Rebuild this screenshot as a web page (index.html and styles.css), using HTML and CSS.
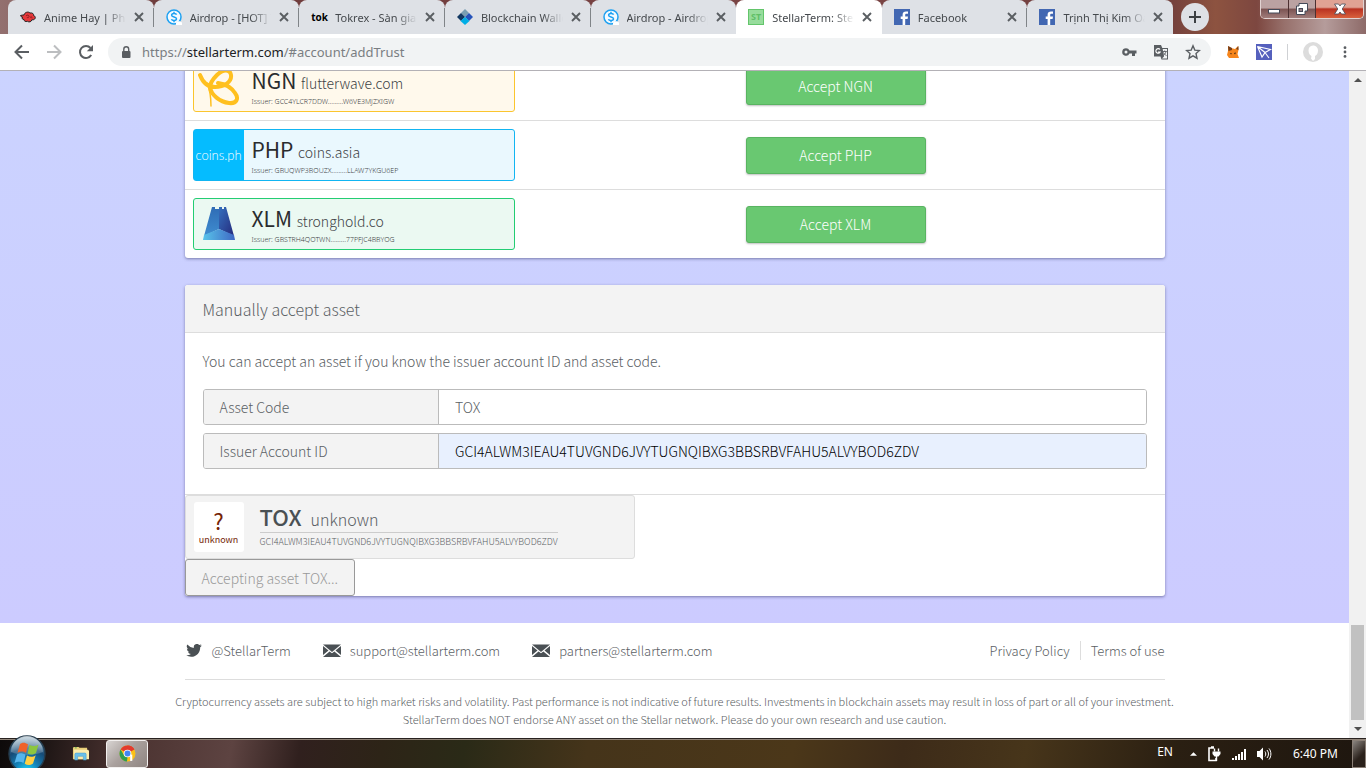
FILE: index.html
```html
<!DOCTYPE html>
<html lang="en">
<head>
  <meta charset="UTF-8" />
  <meta name="viewport" content="width=device-width, initial-scale=1.0"/>
  <title>StellarTerm</title>
  <link rel="stylesheet" href="styles.css">
</head>

<body>
  <!-- shared symbols -->
  <svg class="defs" aria-hidden="true">
    <symbol id="i-close" viewBox="0 0 10 10"><path d="M1 1l8 8M9 1l-8 8" stroke="#5a5e62" stroke-width="1.9"/></symbol>
    <symbol id="i-airdrop" viewBox="0 0 16 16">
      <circle cx="8" cy="8" r="7" fill="#f4faff" stroke="#1da1f2" stroke-width="1.5"/>
      <path d="M10.6 5.6C10 4.2 5.6 4 5.6 6.2c0 2.4 4.900 1.200 4.900 3.600 0 2.200-4.300 2.200-5.100.5M8 2.800v1.600M8 11.500v1.700" fill="none" stroke="#1da1f2" stroke-width="1.500"/>
      <path d="M10 16v-2.500l3-1.500 3 1.500V16z" fill="#fff"/>
    </symbol>
    <symbol id="i-fb" viewBox="0 0 16 16">
      <rect width="16" height="16" fill="#4267b2"/>
      <path d="M8.600 16v-6H6.700V7.500h1.900V5.800C8.600 3.600 9.900 2.500 12 2.500h2v2.300h-1.400c-1.100 0-1.400.5-1.400 1.300v1.400H14L13.600 10h-2.400v6z" fill="#fff"/>
    </symbol>
    <symbol id="i-mail" viewBox="0 0 18 13">
      <path d="M0 .5h18L9 8z" fill="#4a5054"/>
      <path d="M0 2l5.500 4.500L0 11zM18 2l-5.500 4.500L18 11zM0 13l6.600-5.600L9 9.300l2.400-1.900L18 13z" fill="#4a5054"/>
    </symbol>
  </svg>

  <div class="tabstrip">
    <div class="tabs">
      <div class="tab">
        <svg class="favicon" viewBox="0 0 16 16"><path d="M.5 6.500C2 6 3 6 4 6c.5-2.500 4-4 6-2 2.500-.5 4 1 3.500 2.500 2 .5 2.500 3 .5 4-1 .5-1.500.3-2 0-.5 2.500-3 3-4.500 1.800C5.500 13 3.800 12 4 10.500 2.500 10.500 1.500 9.500 2.500 8 1.500 8 .8 7.500.5 6.500z" fill="#e5383b" stroke="#222" stroke-width="1"/><path d="M6 7c1-1.500 3-1 3 .5S7 9 7 8M10 8.500c1-1 2.500-.5 2 .8" fill="none" stroke="#7c1518" stroke-width=".8"/></svg>
        <span class="tab-title">Anime Hay | Phim</span>
        <button class="tab-close" aria-label="Close tab"><svg><use href="#i-close"/></svg></button>
      </div>
      <div class="tab">
        <svg class="favicon"><use href="#i-airdrop"/></svg>
        <span class="tab-title">Airdrop - [HOT] T</span>
        <button class="tab-close" aria-label="Close tab"><svg><use href="#i-close"/></svg></button>
      </div>
      <div class="tab">
        <span class="favicon tok">tok</span>
        <span class="tab-title">Tokrex - Sàn giao</span>
        <button class="tab-close" aria-label="Close tab"><svg><use href="#i-close"/></svg></button>
      </div>
      <div class="tab">
        <svg class="favicon" viewBox="0 0 16 16"><path d="M8 0l4 4-4 4-4-4z" fill="#799eb2"/><path d="M4 4l4 4-4 4-4-4z" fill="#123962"/><path d="M12 4l4 4-4 4-4-4z" fill="#2754ba"/><path d="M8 8l4.500 4L8 16l-4.500-4z" fill="#00aee6"/></svg>
        <span class="tab-title">Blockchain Wallet</span>
        <button class="tab-close" aria-label="Close tab"><svg><use href="#i-close"/></svg></button>
      </div>
      <div class="tab no-sep">
        <svg class="favicon"><use href="#i-airdrop"/></svg>
        <span class="tab-title">Airdrop - Airdrop</span>
        <button class="tab-close" aria-label="Close tab"><svg><use href="#i-close"/></svg></button>
      </div>
      <div class="tab active">
        <span class="favicon st">ST</span>
        <span class="tab-title">StellarTerm: Stellar</span>
        <button class="tab-close" aria-label="Close tab"><svg><use href="#i-close"/></svg></button>
      </div>
      <div class="tab">
        <svg class="favicon"><use href="#i-fb"/></svg>
        <span class="tab-title">Facebook</span>
        <button class="tab-close" aria-label="Close tab"><svg><use href="#i-close"/></svg></button>
      </div>
      <div class="tab no-sep">
        <svg class="favicon"><use href="#i-fb"/></svg>
        <span class="tab-title">Trịnh Thị Kim Oanh</span>
        <button class="tab-close" aria-label="Close tab"><svg><use href="#i-close"/></svg></button>
      </div>
    </div>
    <button class="new-tab" aria-label="New tab"><svg viewBox="0 0 12 12"><path d="M6 0v12M0 6h12" stroke="#3c4043" stroke-width="2"/></svg></button>
    <div class="win-controls">
      <button class="win-btn" aria-label="Minimize"><svg viewBox="0 0 14 12"><rect x="1.500" y="6.500" width="11" height="3.500" fill="#fff" stroke="#454a58"/></svg></button>
      <button class="win-btn" aria-label="Restore"><svg viewBox="0 0 14 12"><path d="M4 .5h8.500V8H10v3.500H1.500V3H4z" fill="#fff" stroke="#454a58"/><rect x="4" y="5.500" width="3.500" height="3" fill="#99818a" stroke="#454a58"/></svg></button>
      <button class="win-btn win-close" aria-label="Close"><svg viewBox="0 0 14 12"><path d="M1.500 1h4L7 3l1.500-2h4L9.200 6l3.300 5h-4L7 9l-1.500 2h-4l3.300-5z" fill="#fff" stroke="#454a58" stroke-width=".8"/></svg></button>
    </div>
  </div>

  <div class="toolbar">
    <div class="nav">
      <button class="icon-btn" aria-label="Back"><svg viewBox="0 0 16 16"><path d="M15 8H2M8 1.500L1.500 8 8 14.500" fill="none" stroke="#5a5e62" stroke-width="2"/></svg></button>
      <button class="icon-btn" aria-label="Forward"><svg viewBox="0 0 16 16"><path d="M1 8h13M8 1.500L14.500 8 8 14.500" fill="none" stroke="#bcbec0" stroke-width="2"/></svg></button>
      <button class="icon-btn" aria-label="Reload"><svg viewBox="0 0 16 16"><path d="M13.200 11A6 6 0 1 1 12.500 4" fill="none" stroke="#5a5e62" stroke-width="2"/><path d="M15 1v6.200H8.800z" fill="#5a5e62"/></svg></button>
    </div>
    <div class="omnibox">
      <svg class="lock" viewBox="0 0 10 13"><rect x="1" y="5" width="8.500" height="7" rx="1" fill="#5a5e62"/><path d="M2.800 5V3.200a2.400 2.400 0 0 1 4.900 0V5" fill="none" stroke="#5a5e62" stroke-width="1.400"/></svg>
      <div class="url">https://<b>stellarterm.com</b>/#account/addTrust</div>
      <div class="omni-icons">
        <svg viewBox="0 0 16 16"><path d="M5 4.200a3.800 3.800 0 1 0 3.500 5.300H11V12h3V9.500h1.500V6.500h-7A3.800 3.800 0 0 0 5 4.200zm0 2.300a1.500 1.500 0 1 1 0 3 1.500 1.500 0 0 1 0-3z" fill="#5a5e62"/></svg>
        <svg viewBox="0 0 16 16"><path d="M1 1h7l1.300 3H15v11.500H8.500l-1-3H1z" fill="#5a5e62"/><path d="M9.700 5H14v9.500H9l2-2z" fill="#f1f3f4"/><path d="M7 5.500A2.300 2.300 0 1 0 7.200 8H5" fill="none" stroke="#fff" stroke-width="1.100"/><path d="M9.500 7.500h4.300M11.700 6.500v1M13 7.500c-.5 2-1.500 3.200-3 4M10.500 8.500c.8 1.500 1.700 2.500 3 3" fill="none" stroke="#5a5e62" stroke-width=".9"/></svg>
        <svg viewBox="0 0 16 16"><path d="M8 1.800l1.800 4.300 4.700.4-3.500 3.100 1 4.600L8 11.800l-4 2.400 1-4.600L1.500 6.500l4.700-.4z" fill="none" stroke="#5a5e62" stroke-width="1.400"/></svg>
      </div>
    </div>
    <div class="extensions">
      <svg viewBox="0 0 16 16"><path d="M3 2l3 2 4 1 3-3 .5 4-1 4L14 14H4l-2-3 1-4z" fill="#f6851b"/><path d="M3 2l4 2v2L3.500 7zM11 5l2.500-3v4z" fill="#763e1a"/><path d="M5 9l2 .5-1 1zM9 9l2-.5-1 2z" fill="#2c1d12"/></svg>
      <svg viewBox="0 0 16 16"><rect width="16" height="16" fill="#5560bd"/><path d="M1.500 2.500l13 3-5.500 3zM1.500 2.500L6 13l3-4.500zM9 8.500l4 5.500M1.500 2.500L9 8.500" fill="none" stroke="#fff" stroke-width="1.100"/></svg>
      <span class="ext-sep"></span>
      <svg class="avatar" viewBox="0 0 20 20"><circle cx="10" cy="10" r="10" fill="#dcdcdc"/><path d="M10 3.500c-3 0-4.500 2.200-4.500 5 0 3 1.700 5 3 5.500l-.5 2.500 2 2.500 2-2v-3c1.500-.5 3-2.500 3-5.500 0-2.800-2-5-5-5z" fill="#fff"/></svg>
      <svg class="dots" viewBox="0 0 16 16"><g fill="#5a5e62"><circle cx="8" cy="3" r="1.600"/><circle cx="8" cy="8" r="1.600"/><circle cx="8" cy="13" r="1.600"/></g></svg>
    </div>
  </div>

  <div class="viewport">
    <div class="page">
      <div class="main">
        <div class="card">
          <table class="assets">
            <tr>
              <td class="asset-cell">
                <div class="asset ngn">
                  <div class="asset-logo"><svg viewBox="0 0 50 50"><g fill="none" stroke="#ffc01f" stroke-linecap="round"><path d="M6 14c3 8 8 12 15 12 9 0 17-5 16-12-1-6-8-6-14 0-4 4-7 8-7 12 1 8 10 15 19 16 8 1 10-5 6-10-4-6-10-9-17-10" stroke-width="4"/><path d="M13 22c3 7 4 14 4 23" stroke-width="1.500"/></g></svg></div>
                  <div class="asset-info">
                    <div class="asset-name">NGN <span>flutterwave.com</span></div>
                    <div class="asset-issuer">Issuer: GCC4YLCR7DDW.........W6VE3MJZXIGW</div>
                  </div>
                </div>
              </td>
              <td><button class="btn accept">Accept NGN</button></td>
            </tr>
            <tr>
              <td class="asset-cell">
                <div class="asset php">
                  <div class="asset-logo coins">coins.ph</div>
                  <div class="asset-info">
                    <div class="asset-name">PHP <span>coins.asia</span></div>
                    <div class="asset-issuer">Issuer: GBUQWP3BOUZX.........LLAW7YKGU6EP</div>
                  </div>
                </div>
              </td>
              <td><button class="btn accept">Accept PHP</button></td>
            </tr>
            <tr>
              <td class="asset-cell">
                <div class="asset xlm">
                  <div class="asset-logo"><svg viewBox="0 0 50 50">
                    <defs>
                      <linearGradient id="sh1" x1="0" y1="0" x2="0" y2="1"><stop offset="0" stop-color="#2f6cb5"/><stop offset="1" stop-color="#3f8dd0"/></linearGradient>
                      <linearGradient id="sh2" x1="0" y1="0" x2="1" y2="1"><stop offset="0" stop-color="#356fbd"/><stop offset="1" stop-color="#252a7c"/></linearGradient>
                      <linearGradient id="sh3" x1="0" y1="0" x2="1" y2="0"><stop offset="0" stop-color="#58c4ea"/><stop offset="1" stop-color="#3f68c4"/></linearGradient>
                    </defs>
                    <path d="M18 8h3v2h4v20L10 37z" fill="url(#sh1)"/><path d="M25 10V8h3v2h2V8h2l8 29-15-7z" fill="url(#sh2)"/><path d="M25 30l15 6 1 5H9l1-5z" fill="url(#sh3)"/></svg></div>
                  <div class="asset-info">
                    <div class="asset-name">XLM <span>stronghold.co</span></div>
                    <div class="asset-issuer">Issuer: GBSTRH4QOTWN.........77PFJC4BBYOG</div>
                  </div>
                </div>
              </td>
              <td><button class="btn accept">Accept XLM</button></td>
            </tr>
          </table>
        </div>

        <div class="card">
          <h3 class="card-title">Manually accept asset</h3>
          <form class="manual">
            <p>You can accept an asset if you know the issuer account ID and asset code.</p>
            <div class="field">
              <label for="code">Asset Code</label>
              <input id="code" type="text" value="TOX">
            </div>
            <div class="field filled">
              <label for="issuer">Issuer Account ID</label>
              <input id="issuer" type="text" value="GCI4ALWM3IEAU4TUVGND6JVYTUGNQIBXG3BBSRBVFAHU5ALVYBOD6ZDV">
            </div>
          </form>
          <div class="result">
            <div class="asset-big">
              <div class="unknown-logo"><b>?</b>unknown</div>
              <div class="big-info">
                <div class="big-name"><b>TOX</b><span>unknown</span></div>
                <div class="big-issuer">GCI4ALWM3IEAU4TUVGND6JVYTUGNQIBXG3BBSRBVFAHU5ALVYBOD6ZDV</div>
              </div>
            </div>
            <button class="btn pending" disabled>Accepting asset TOX...</button>
          </div>
        </div>
      </div>

      <footer class="footer">
        <div class="footer-links">
          <a href="#"><svg viewBox="0 0 24 20"><path d="M24 2.400a10 10 0 0 1-2.800.8A5 5 0 0 0 23.300.400a10 10 0 0 1-3.100 1.200 4.900 4.900 0 0 0-8.400 4.500A14 14 0 0 1 1.700.9a4.900 4.900 0 0 0 1.500 6.600 4.900 4.900 0 0 1-2.200-.6v.1a4.900 4.900 0 0 0 3.900 4.800 5 5 0 0 1-2.200.1 4.900 4.900 0 0 0 4.600 3.400A9.900 9.900 0 0 1 0 17.400a14 14 0 0 0 7.500 2.200c9.100 0 14-7.500 14-14v-.6A10 10 0 0 0 24 2.400z" fill="#4a5054"/></svg>@StellarTerm</a>
          <a href="#"><svg><use href="#i-mail"/></svg>support@stellarterm.com</a>
          <a href="#"><svg><use href="#i-mail"/></svg>partners@stellarterm.com</a>
          <div class="legal">
            <a href="#">Privacy Policy</a>
            <a href="#">Terms of use</a>
          </div>
        </div>
        <p class="disclaimer">Cryptocurrency assets are subject to high market risks and volatility. Past performance is not indicative of future results. Investments in blockchain assets may result in loss of part or all of your investment.<br>StellarTerm does NOT endorse ANY asset on the Stellar network. Please do your own research and use caution.</p>
      </footer>
    </div>
    <div class="scrollbar">
      <span class="arrow up"></span>
      <span class="thumb"></span>
      <span class="arrow down"></span>
    </div>
  </div>

  <div class="taskbar">
    <button class="start" aria-label="Start">
      <svg viewBox="0 0 38 38">
        <defs>
          <radialGradient id="orb" cx=".5" cy="1" r=".95"><stop offset="0" stop-color="#1fe0ff"/><stop offset=".35" stop-color="#1382b8"/><stop offset=".7" stop-color="#174a75"/><stop offset="1" stop-color="#6d93ab"/></radialGradient>
          <linearGradient id="gloss" x1="0" y1="0" x2="0" y2="1"><stop offset="0" stop-color="#fff" stop-opacity=".65"/><stop offset="1" stop-color="#fff" stop-opacity=".15"/></linearGradient>
        </defs>
        <circle cx="19" cy="19" r="18" fill="url(#orb)" stroke="#253c4d" stroke-width="1.500"/>
        <path d="M3 17a16 16 0 0 1 32 0c-9 4-23 4-32 0z" fill="url(#gloss)"/>
        <path d="M12 9c3-2 5-1.500 8 .3L18 18c-3-1.700-5-2-8.500-.2z" fill="#f0622a"/>
        <path d="M21.500 10c3 1.500 6 1.500 9-.5L28 18c-3 2-6 2-8.500.5z" fill="#8cc63f"/>
        <path d="M9 19.500c3-2 5.500-1.500 8.500.2L15.500 28c-3-1.800-5.500-1.800-9 0z" fill="#55b5ec"/>
        <path d="M19 20.500c3 1.700 6 1.700 8.700-.3L25 28.500c-3 2-5.500 2-8.300.3z" fill="#ffd042"/>
      </svg>
    </button>
    <button class="task" aria-label="Explorer">
      <svg viewBox="0 0 18 16"><path d="M1 2l1-1h5l1 1h8v12H1z" fill="#e8cf78"/><path d="M2 4h15l1 1v9H2z" fill="#fbecae"/><path d="M3 15V9c0-1 .5-1.500 1.500-1.500h9c1 0 1.500.5 1.500 1.500v6h-3v-4H6v4z" fill="#6bc0ea" stroke="#3e93c4" stroke-width=".5"/><path d="M3 2h2" stroke="#4caf50" stroke-width="1"/></svg>
    </button>
    <button class="task running" aria-label="Chrome">
      <svg viewBox="0 0 16 16"><circle cx="8" cy="8" r="7.500" fill="#fbc116"/><path d="M8 8L1.500 4.200A7.500 7.500 0 0 1 14.500 4.200z" fill="#e33b2e"/><path d="M8 .5a7.500 7.500 0 0 1 6.500 3.800H8z" fill="#e33b2e"/><path d="M1.500 4.200L5 10l3 1.500L7.500 15.500A7.500 7.500 0 0 1 1.500 4.200z" fill="#2f9e4f"/><circle cx="8" cy="8" r="3.600" fill="#fff"/><circle cx="8" cy="8" r="2.800" fill="#4285f4"/><path d="M10.500 9h2v6h-2z" fill="#fff"/></svg>
    </button>
    <div class="tray">
      <span class="lang">EN</span>
      <svg class="tray-up" viewBox="0 0 8 4"><path d="M0 4l4-4 4 4z" fill="#fff"/></svg>
      <svg viewBox="0 0 16 16"><path d="M8 2H3v12.500h7V12M5 1h3" fill="none" stroke="#fff" stroke-width="1.600"/><path d="M6.500 5.500h8v2.500l-2 2.500h-4L6.500 8z" fill="#fff"/><path d="M8.500 2.500v3M12.500 2.500v3M10.500 10v5" stroke="#fff" stroke-width="1.400"/></svg>
      <svg viewBox="0 0 16 16"><g fill="#fff"><rect x="1" y="12" width="2" height="2"/><rect x="4" y="10" width="2" height="4"/><rect x="7" y="8" width="2" height="6"/><rect x="10" y="6" width="2" height="8"/><rect x="13" y="3" width="2" height="11"/></g></svg>
      <svg viewBox="0 0 16 16"><path d="M1 5h2.500L7 1.500v13L3.500 11H1z" fill="#fff"/><path d="M9 5.500c1 1.500 1 3.500 0 5M11 4c2 2.500 2 5.500 0 8M13 2.500c2.500 3 2.500 8 0 11" fill="none" stroke="#fff"/></svg>
      <span class="clock">6:40 PM</span>
    </div>
    <button class="peek" aria-label="Show desktop"></button>
  </div>
</body>
</html>
```
FILE: styles.css
```css
* {
  box-sizing: border-box;
}

body {
  margin: 0;
  height: 100vh;
  display: flex;
  flex-direction: column;
  overflow: hidden;
  background: #fff;
  font-family: "Noto Sans", sans-serif;
  font-size: 11px;
}

button {
  font: inherit;
  border: none;
  background: none;
  padding: 0;
}

svg {
  display: block;
  flex: none;
}

.defs {
  position: absolute;
  width: 0;
  height: 0;
}

/* tab strip */
.tabstrip {
  display: flex;
  height: 34px;
  flex: none;
  padding-left: 8px;
  background: linear-gradient(90deg, #93706f 0, #6d3a3a 12%, #7b4545 60%, #6f3d3c 85%, #8d5340 89%, #7d4740 92%, #97706b 94%, #b59c9b 97%, #8d6a68 100%);
}

.tabs {
  display: flex;
  flex: 1;
  max-width: 1165px;
}

.tab {
  display: flex;
  align-items: center;
  flex: 1;
  min-width: 0;
  padding: 0 10px 0 12px;
  background: #dee1e6;
  border-radius: 8px 8px 0 0;
  position: relative;
}

.tab::after {
  content: "";
  position: absolute;
  right: 0;
  top: 8px;
  width: 1px;
  height: 19px;
  background: #808488;
}

.tab.active {
  background: #fff;
}

.tab.active::after,
.tab.no-sep::after {
  display: none;
}

.favicon {
  width: 16px;
  height: 16px;
  margin-right: 8px;
  flex: none;
}

.tok {
  font: bold 10px/16px "Open Sans", sans-serif;
  color: #000;
}

.st {
  border: 1px solid #63c56b;
  background: #97dc9c;
  color: #5fbf67;
  font: bold 9px/14px "Open Sans", sans-serif;
  text-align: center;
}

.tab-title {
  flex: 1;
  overflow: hidden;
  white-space: nowrap;
  color: #45494d;
  -webkit-mask-image: linear-gradient(90deg, #000 75%, transparent);
  mask-image: linear-gradient(90deg, #000 75%, transparent);
}

.tab-close {
  width: 10px;
  height: 10px;
  margin-left: 8px;
}

.tab-close svg {
  width: 10px;
  height: 10px;
}

.new-tab {
  width: 28px;
  height: 28px;
  margin: 3px 0 0 8px;
  border-radius: 50%;
  background: #dee1e6;
  display: grid;
  place-items: center;
}

.new-tab svg {
  width: 12px;
}

.win-controls {
  display: flex;
  width: 104px;
  height: 19px;
  margin: 0 2px 0 auto;
  border: 1px solid #e2d3d2;
  border-top: none;
  border-radius: 0 0 5px 5px;
  overflow: hidden;
}

.win-btn {
  flex: 1;
  display: grid;
  place-items: center;
  border-right: 1px solid #4c3031;
  background: linear-gradient(#bba2a2 45%, #7b5352 50%, #a07c7a);
}

.win-btn svg {
  width: 14px;
  height: 12px;
}

.win-close {
  flex: 0 0 47px;
  border-right: none;
  background: linear-gradient(#e0a294 40%, #b93222 50%, #d9613d);
}

/* toolbar */
.toolbar {
  display: flex;
  align-items: center;
  height: 37px;
  flex: none;
  background: #fff;
  border-bottom: 1px solid #b3b1b6;
}

.nav {
  display: flex;
  gap: 16px;
  padding: 0 14px;
}

.icon-btn svg,
.omni-icons svg,
.extensions svg {
  width: 16px;
  height: 16px;
}

.omnibox {
  flex: 1;
  display: flex;
  align-items: center;
  height: 28px;
  padding: 0 10px 0 13px;
  border-radius: 14px;
  background: #f1f3f4;
}

.lock {
  width: 10px;
  height: 13px;
}

.url {
  flex: 1;
  margin-left: 11px;
  font-size: 13px;
  color: #7a7e82;
}

.url b {
  font-weight: normal;
  color: #202124;
}

.omni-icons {
  display: flex;
  gap: 16px;
}

.extensions {
  display: flex;
  align-items: center;
  gap: 15px;
  padding: 0 14px;
}

.ext-sep {
  width: 1px;
  height: 16px;
  background: #cfd1d4;
}

.extensions .avatar {
  width: 20px;
  height: 20px;
}

.extensions .dots {
  width: 14px;
}

/* page */
.viewport {
  flex: 1;
  min-height: 0;
  display: flex;
}

.page {
  flex: 1;
  display: flex;
  flex-direction: column;
  justify-content: flex-end;
  overflow: hidden;
  background: linear-gradient(#cbd3ff, #cccbff 83%);
  font-family: "Noto Sans CJK SC", "Noto Sans", sans-serif;
  font-weight: 300;
  font-size: 14px;
  color: #5a6064;
}

.main {
  width: 100%;
  max-width: 980px;
  margin: 0 auto;
  flex: none;
}

.card {
  margin-bottom: 27px;
  background: #fff;
  border-radius: 3px;
  box-shadow: 0 1px 3px rgba(40, 40, 90, 0.5);
}

.assets {
  width: 100%;
  border-collapse: collapse;
}

.assets td {
  padding: 8px;
}

.assets tr + tr td {
  border-top: 1px solid #ddd;
}

.asset-cell {
  width: 553px;
}

.asset {
  display: flex;
  width: 322px;
  height: 52px;
  border: 1px solid;
  border-radius: 3px;
}

.ngn {
  border-color: #fbc52e;
  background: #fff9ec;
}

.php {
  border-color: #12b5f2;
  background: #eaf8fe;
}

.xlm {
  border-color: #23cd73;
  background: #ebf9f2;
}

.asset-logo,
.asset-logo svg {
  width: 50px;
  height: 50px;
}

.coins {
  background: #05bcff;
  color: #fff;
  font: 300 13px/50px Lato, sans-serif;
  text-align: center;
}

.asset-info {
  padding: 5px 0 0 8px;
}

.asset-name {
  font-size: 21px;
  line-height: 29px;
  font-weight: 400;
  color: #2a2c2e;
}

.asset-name span {
  font-size: 14px;
  font-weight: 300;
  color: #404346;
}

.asset-issuer {
  font-family: "Noto Sans", sans-serif;
  font-size: 7px;
  line-height: 8px;
  color: #404346;
}

.btn {
  display: block;
  height: 37px;
  border-radius: 3px;
}

.accept {
  width: 180px;
  border: 1px solid #59b461;
  background: #69c871;
  color: #fff;
  box-shadow: 0 1px 2px rgba(0, 0, 0, 0.25);
}

.card-title {
  margin: 0;
  padding: 0 18px;
  font-size: 16px;
  font-weight: 300;
  line-height: 48px;
  height: 48px;
  border-bottom: 1px solid #ddd;
  border-radius: 3px 3px 0 0;
  background: #f3f3f3;
}

.manual {
  padding: 17px 18px 25px;
}

.manual p {
  margin: 0 0 16px;
  line-height: 23px;
}

.field {
  display: flex;
  height: 36px;
  border: 1px solid #bbb;
  border-radius: 3px;
  overflow: hidden;
}

.field + .field {
  margin-top: 8px;
}

.field label {
  width: 25%;
  padding-left: 16px;
  line-height: 34px;
  background: #f3f3f3;
  border-right: 1px solid #bbb;
}

.field input {
  flex: 1;
  border: none;
  outline: none;
  padding: 0 16px;
  font: inherit;
  color: inherit;
  background: #fff;
}

.filled input {
  background: #e8f0fe;
  color: #000;
}

.result {
  border-top: 1px solid #ddd;
}

.asset-big {
  display: flex;
  width: 450px;
  height: 64px;
  padding: 6px 8px;
  border: 1px solid #ddd;
  border-radius: 3px;
  background: #f3f3f3;
}

.unknown-logo {
  width: 50px;
  height: 50px;
  border-radius: 3px;
  background: #fff;
  color: #742405;
  font-size: 9px;
  font-weight: 400;
  line-height: 12px;
  text-align: center;
}

.unknown-logo b {
  display: block;
  padding-top: 4px;
  font-size: 22px;
  font-weight: 400;
  line-height: 28px;
}

.big-info {
  margin-left: 16px;
}

.big-name {
  display: flex;
  align-items: baseline;
  gap: 9px;
  height: 31px;
  border-bottom: 1px solid #ccc;
  font-size: 16px;
  line-height: 28px;
}

.big-name b {
  font-size: 22px;
  font-weight: 500;
  color: #4a5054;
}

.big-issuer {
  font-size: 9px;
  line-height: 18px;
}

.pending {
  padding: 0 16px;
  border: 1px solid #999;
  background: #f3f3f3;
  color: #999;
}

/* footer */
.footer {
  flex: none;
  height: 115px;
  padding: 0 calc(50% - 490px);
  background: #fff;
}

.footer a {
  display: flex;
  align-items: center;
  color: inherit;
  text-decoration: none;
}

.footer-links {
  display: flex;
  align-items: center;
  gap: 32px;
  height: 57px;
  padding-bottom: 2px;
  border-bottom: 1px solid #ddd;
  font-size: 13px;
}

.footer-links svg {
  width: 18px;
  height: 13px;
  margin-right: 9px;
}

.legal {
  display: flex;
  margin-left: auto;
}

.legal a + a {
  margin-left: 10px;
  padding-left: 10px;
  border-left: 1px solid #ddd;
}

.disclaimer {
  margin: 12px -10px 0;
  font-size: 11px;
  line-height: 18px;
  text-align: center;
  white-space: nowrap;
}

.scrollbar {
  width: 17px;
  display: flex;
  flex-direction: column;
  align-items: center;
  background: #f1f1f1;
}

.thumb {
  width: 13px;
  height: 95px;
  margin-top: auto;
  background: #c1c1c1;
}

.arrow {
  border: 4px solid transparent;
}

.up {
  border-bottom-color: #505050;
  border-top: none;
  margin-top: 7px;
}

.down {
  border-top-color: #505050;
  border-bottom: none;
  margin: 7px 0;
}

/* taskbar */
.taskbar {
  display: flex;
  align-items: center;
  height: 30px;
  flex: none;
  border-top: 1px solid #28221f;
  box-shadow: inset 0 1px #8f8378;
  background: linear-gradient(100deg, #0d0a0a 0, #1b1413 3%, #4a3230 9%, #5d4341 17%, #30201e 22%, #2d2417 28%, #2a2a17 34%, #45341a 43%, #4b3719 58%, #3d2b19 66%, #47351a 75%, #2a1f12 86%, #1e160f 100%);
  color: #fff;
}

.start {
  width: 38px;
  height: 38px;
  margin: 0 17px 0 8px;
  position: relative;
  z-index: 1;
}

.start svg {
  width: 38px;
}

.task {
  width: 35px;
  height: 28px;
  display: grid;
  place-items: center;
}

.task svg {
  width: 17px;
  height: 17px;
}

.running {
  width: 42px;
  margin-left: 8px;
  border: 1px solid #f2efee;
  border-radius: 3px;
  background: linear-gradient(135deg, #d8d4d2, #aaa19e 45%, #8f8581);
}

.tray {
  display: flex;
  align-items: center;
  gap: 9px;
  margin-left: auto;
  font-size: 12px;
}

.tray svg {
  width: 16px;
  height: 16px;
}

.tray .tray-up {
  width: 7px;
  height: 4px;
}

.lang {
  margin-right: 8px;
  padding-bottom: 5px;
}

.clock {
  margin: 0 14px 0 12px;
}

.peek {
  width: 14px;
  height: 28px;
  border: 1px solid #8a7f76;
  background: linear-gradient(135deg, #8b8580, #2a211b 60%);
}
```
